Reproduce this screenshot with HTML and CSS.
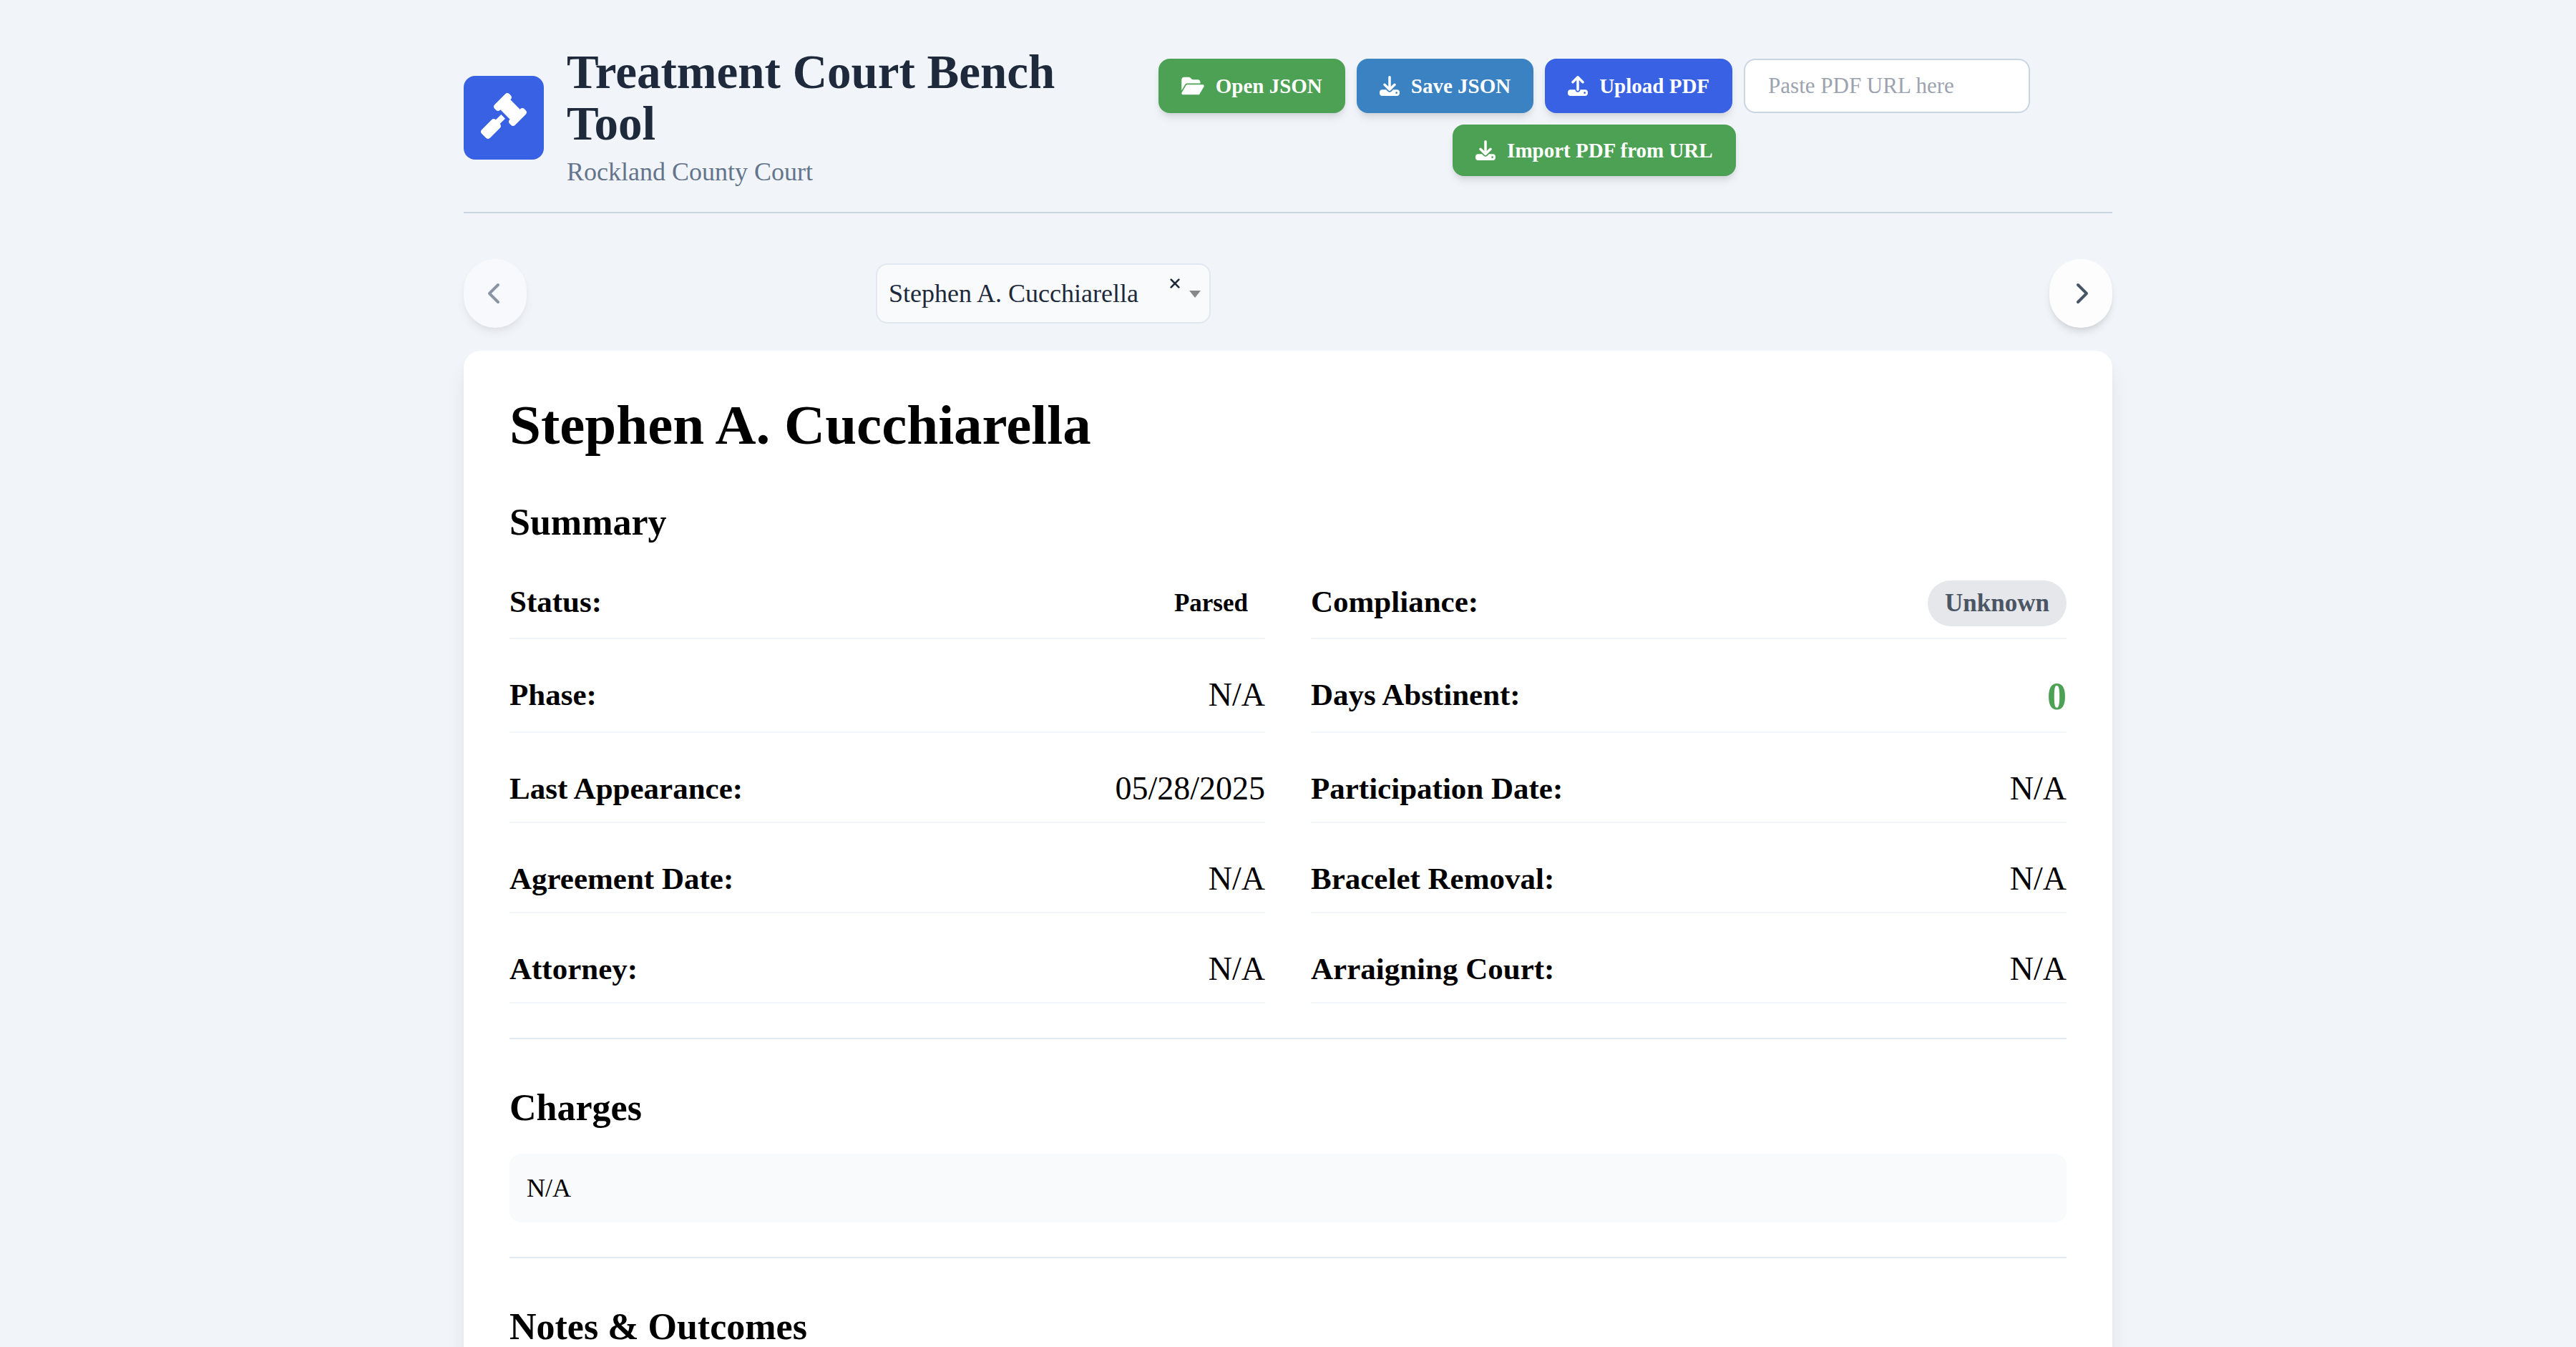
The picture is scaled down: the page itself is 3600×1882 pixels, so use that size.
FILE: index.html
```html
<!DOCTYPE html>
<html lang="en">
<head>
  <meta charset="utf-8">
  <meta name="viewport" content="width=device-width, initial-scale=1">
  <title>Treatment Court Bench Tool</title>
  <link rel="stylesheet" href="styles.css">
</head>
<body>
  <div class="page">
    <header class="header">
      <div class="brand">
        <div class="brand-icon">
          <svg class="icon-gavel" viewBox="0 0 512 512" aria-hidden="true"><path d="M318.6 9.4c-12.5-12.5-32.8-12.5-45.3 0l-120 120c-12.5 12.5-12.5 32.8 0 45.3l16 16c12.5 12.5 32.8 12.5 45.3 0l4-4L325.4 293.4l-4 4c-12.5 12.5-12.5 32.8 0 45.3l16 16c12.5 12.5 32.8 12.5 45.3 0l120-120c12.5-12.5 12.5-32.8 0-45.3l-16-16c-12.5-12.5-32.8-12.5-45.3 0l-4 4L330.6 74.6l4-4c12.5-12.5 12.5-32.8 0-45.3l-16-16zm-152 288c-12.5-12.5-32.8-12.5-45.3 0l-112 112c-12.5 12.5-12.5 32.8 0 45.3l48 48c12.5 12.5 32.8 12.5 45.3 0l112-112c12.5-12.5 12.5-32.8 0-45.3l-1.4-1.4L272 285.3 226.7 240 168 298.7l-1.4-1.4z"/></svg>
        </div>
        <div class="brand-text">
          <h1 class="brand-title">Treatment Court Bench Tool</h1>
          <p class="brand-subtitle">Rockland County Court</p>
        </div>
      </div>
      <div class="actions">
        <button type="button" class="btn btn-green">
          <svg class="icon-folder" viewBox="0 0 576 512" aria-hidden="true"><path d="M88.7 223.8L0 375.8V96C0 60.7 28.7 32 64 32H181.5c17 0 33.3 6.7 45.3 18.7l26.5 26.5c12 12 28.3 18.7 45.3 18.7H416c35.3 0 64 28.7 64 64v32H144c-22.8 0-43.8 12.1-55.3 31.8zm27.6 16.1C122.1 230 132.6 224 144 224H544c11.5 0 22 6.1 27.7 16.1s5.7 22.2-.1 32.1l-112 192C453.9 474 443.4 480 432 480H32c-11.5 0-22-6.1-27.7-16.1s-5.7-22.2 .1-32.1l112-192z"/></svg>
          Open JSON
        </button>
        <button type="button" class="btn btn-blue">
          <svg class="icon" viewBox="0 0 512 512" aria-hidden="true"><path d="M288 32c0-17.7-14.3-32-32-32s-32 14.3-32 32V274.7l-73.4-73.4c-12.5-12.5-32.8-12.5-45.3 0s-12.5 32.8 0 45.3l128 128c12.5 12.5 32.8 12.5 45.3 0l128-128c12.5-12.5 12.5-32.8 0-45.3s-32.8-12.5-45.3 0L288 274.7V32zM64 352c-35.3 0-64 28.7-64 64v32c0 35.3 28.7 64 64 64H448c35.3 0 64-28.7 64-64V416c0-35.3-28.7-64-64-64H346.5l-45.3 45.3c-25 25-65.5 25-90.5 0L165.5 352H64zm368 56a24 24 0 1 1 0 48 24 24 0 1 1 0-48z"/></svg>
          Save JSON
        </button>
        <button type="button" class="btn btn-royal">
          <svg class="icon" viewBox="0 0 512 512" aria-hidden="true"><path d="M288 109.3V352c0 17.7-14.3 32-32 32s-32-14.3-32-32V109.3l-73.4 73.4c-12.5 12.5-32.8 12.5-45.3 0s-12.5-32.8 0-45.3l128-128c12.5-12.5 32.8-12.5 45.3 0l128 128c12.5 12.5 12.5 32.8 0 45.3s-32.8 12.5-45.3 0L288 109.3zM64 352H192c0 35.3 28.7 64 64 64s64-28.7 64-64H448c35.3 0 64 28.7 64 64v32c0 35.3-28.7 64-64 64H64c-35.3 0-64-28.7-64-64V416c0-35.3 28.7-64 64-64zM432 456a24 24 0 1 0 0-48 24 24 0 1 0 0 48z"/></svg>
          Upload PDF
        </button>
        <input type="text" class="url-input" placeholder="Paste PDF URL here" aria-label="PDF URL">
        <button type="button" class="btn btn-green">
          <svg class="icon" viewBox="0 0 512 512" aria-hidden="true"><path d="M288 32c0-17.7-14.3-32-32-32s-32 14.3-32 32V274.7l-73.4-73.4c-12.5-12.5-32.8-12.5-45.3 0s-12.5 32.8 0 45.3l128 128c12.5 12.5 32.8 12.5 45.3 0l128-128c12.5-12.5 12.5-32.8 0-45.3s-32.8-12.5-45.3 0L288 274.7V32zM64 352c-35.3 0-64 28.7-64 64v32c0 35.3 28.7 64 64 64H448c35.3 0 64-28.7 64-64V416c0-35.3-28.7-64-64-64H346.5l-45.3 45.3c-25 25-65.5 25-90.5 0L165.5 352H64zm368 56a24 24 0 1 1 0 48 24 24 0 1 1 0-48z"/></svg>
          Import PDF from URL
        </button>
      </div>
    </header>

    <nav class="switcher" aria-label="Participants">
      <button type="button" class="round-btn" aria-label="Previous participant" disabled>
        <svg class="icon-chevron" viewBox="0 0 320 512" aria-hidden="true"><path d="M9.4 233.4c-12.5 12.5-12.5 32.8 0 45.3l192 192c12.5 12.5 32.8 12.5 45.3 0s12.5-32.8 0-45.3L77.3 256 246.6 86.6c12.5-12.5 12.5-32.8 0-45.3s-32.8-12.5-45.3 0l-192 192z"/></svg>
      </button>
      <div class="picker">
        <div class="picker-box">
          <select class="picker-select" aria-label="Participant">
            <option>Stephen A. Cucchiarella</option>
          </select>
          <button type="button" class="picker-clear" aria-label="Clear selection">
            <svg class="picker-cross" viewBox="0 0 12 12" aria-hidden="true"><path d="M2 2l8 8M10 2l-8 8"/></svg>
          </button>
          <svg class="picker-arrow" viewBox="0 0 16 10" aria-hidden="true"><path d="M0 0h16l-8 10z"/></svg>
        </div>
      </div>
      <button type="button" class="round-btn" aria-label="Next participant">
        <svg class="icon-chevron" viewBox="0 0 320 512" aria-hidden="true"><path d="M310.6 233.4c12.5 12.5 12.5 32.8 0 45.3l-192 192c-12.5 12.5-32.8 12.5-45.3 0s-12.5-32.8 0-45.3L242.7 256 73.4 86.6c-12.5-12.5-12.5-32.8 0-45.3s32.8-12.5 45.3 0l192 192z"/></svg>
      </button>
    </nav>

    <main class="card">
      <h2 class="name">Stephen A. Cucchiarella</h2>

      <section class="section">
        <h3 class="section-title">Summary</h3>
        <dl class="facts">
          <div class="fact"><dt>Status:</dt><dd><span class="badge">Parsed</span></dd></div>
          <div class="fact"><dt>Compliance:</dt><dd><span class="badge badge-unknown">Unknown</span></dd></div>
          <div class="fact"><dt>Phase:</dt><dd>N/A</dd></div>
          <div class="fact"><dt>Days Abstinent:</dt><dd class="days">0</dd></div>
          <div class="fact"><dt>Last Appearance:</dt><dd>05/28/2025</dd></div>
          <div class="fact"><dt>Participation Date:</dt><dd>N/A</dd></div>
          <div class="fact"><dt>Agreement Date:</dt><dd>N/A</dd></div>
          <div class="fact"><dt>Bracelet Removal:</dt><dd>N/A</dd></div>
          <div class="fact"><dt>Attorney:</dt><dd>N/A</dd></div>
          <div class="fact"><dt>Arraigning Court:</dt><dd>N/A</dd></div>
        </dl>
      </section>

      <section class="section">
        <h3 class="section-title">Charges</h3>
        <div class="note">N/A</div>
      </section>

      <section class="section">
        <h3 class="section-title">Notes &amp; Outcomes</h3>
      </section>
    </main>
  </div>
</body>
</html>
```
FILE: styles.css
```css
* {
  box-sizing: border-box;
}

body {
  margin: 0;
  background: #f1f5fa;
  color: #1e293b;
  font-family: "Liberation Serif", serif;
  font-size: 36px;
  line-height: 48px;
}

h1, h2, h3, p, dl, dd {
  margin: 0;
}

button, input, select {
  font-family: inherit;
}

svg {
  display: block;
  flex: none;
  fill: currentColor;
}

.page {
  max-width: 2304px;
  margin: 0 auto;
  padding: 64px 0;
}

/* Header */
.header {
  display: grid;
  grid-template-columns: minmax(0, 13fr) minmax(0, 22fr);
  align-items: center;
  padding-bottom: 32px;
  border-bottom: 2px solid #cbd5e1;
}

.brand {
  display: flex;
  align-items: center;
  gap: 32px;
}

.brand-icon {
  padding: 24px 24px 29px;
  border-radius: 16px;
  background: #3861e3;
  color: #fff;
}

.icon-gavel {
  width: 64px;
  height: 64px;
}

.brand-title {
  font-size: 67px;
  line-height: 72px;
}

.brand-subtitle {
  margin-top: 8px;
  color: #64748b;
}

.actions {
  display: flex;
  flex-wrap: wrap;
  justify-content: center;
  gap: 16px;
}

.btn {
  display: flex;
  align-items: center;
  gap: 16px;
  padding: 16px 32px;
  border: 0;
  border-radius: 16px;
  color: #fff;
  font-size: 29px;
  font-weight: 700;
  line-height: 40px;
  box-shadow: 0 8px 12px -2px rgba(0, 0, 0, 0.1), 0 4px 8px -4px rgba(0, 0, 0, 0.1);
}

.btn-green {
  background: #4ca154;
}

.btn-blue {
  background: #3b82c3;
}

.btn-royal {
  background: #3861e3;
}

.icon {
  width: 28px;
  height: 28px;
}

.icon-folder {
  width: 32px;
  height: 28px;
}

.url-input {
  width: 400px;
  height: 76px;
  padding: 16px 32px;
  border: 2px solid #cbd5e1;
  border-radius: 16px;
  background: #fff;
  color: #1e293b;
  font-size: 31px;
}

.url-input::placeholder {
  color: #9ca3af;
}

/* Participant switcher */
.switcher {
  display: flex;
  align-items: center;
  justify-content: space-between;
  margin: 64px 0 32px;
}

.round-btn {
  display: flex;
  align-items: center;
  justify-content: center;
  width: 88px;
  height: 96px;
  padding: 0;
  border: 0;
  border-radius: 48px;
  background: #fdfdfe;
  color: #475569;
  box-shadow: 0 8px 12px -2px rgba(0, 0, 0, 0.1), 0 4px 8px -4px rgba(0, 0, 0, 0.1);
}

.round-btn:disabled {
  opacity: 0.6;
}

.icon-chevron {
  width: 20px;
  height: 32px;
}

.picker {
  flex: 0 1 50%;
}

.picker-box {
  position: relative;
  width: 468px;
}

.picker-select {
  display: block;
  width: 100%;
  height: 84px;
  padding: 0 96px 0 16px;
  border: 2px solid #e2e8f0;
  border-radius: 16px;
  background: #f8fafc;
  color: #1e293b;
  font-size: 36px;
  appearance: none;
}

.picker-clear {
  position: absolute;
  top: 14px;
  right: 36px;
  padding: 6px;
  border: 0;
  background: none;
  color: #1e293b;
}

.picker-cross {
  width: 16px;
  height: 16px;
  stroke: currentColor;
  stroke-width: 2;
  stroke-linecap: round;
}

.picker-arrow {
  position: absolute;
  top: 38px;
  right: 14px;
  width: 16px;
  height: 10px;
  color: #888;
  pointer-events: none;
}

/* Participant card */
.card {
  padding: 64px;
  border-radius: 24px;
  background: #fff;
  color: #000;
  box-shadow: 0 20px 30px -6px rgba(0, 0, 0, 0.1), 0 8px 12px -4px rgba(0, 0, 0, 0.05);
}

.name {
  margin-bottom: 64px;
  font-size: 79px;
  line-height: 80px;
}

.section + .section {
  margin-top: 48px;
  padding-top: 64px;
  border-top: 2px solid #e2e8f0;
}

.section-title {
  font-size: 52px;
  line-height: 64px;
}

.facts {
  display: grid;
  grid-template-columns: 1fr 1fr;
  gap: 48px 64px;
  margin-top: 49px;
}

.fact {
  display: flex;
  justify-content: space-between;
  padding-bottom: 16px;
  border-bottom: 2px solid #f1f5f9;
  font-size: 46px;
  line-height: 60px;
}

.fact dt {
  font-size: 43px;
  font-weight: 700;
}

.badge {
  display: block;
  padding: 8px 24px;
  border-radius: 32px;
  font-size: 35px;
  font-weight: 700;
  line-height: 48px;
}

.badge-unknown {
  background: #e5e7eb;
  color: #4b5563;
}

.fact .days {
  color: #4ca154;
  font-size: 54px;
  font-weight: 700;
  line-height: 65px;
}

.note {
  margin-top: 32px;
  padding: 24px;
  border-radius: 16px;
  background: #f8fafc;
}
```
